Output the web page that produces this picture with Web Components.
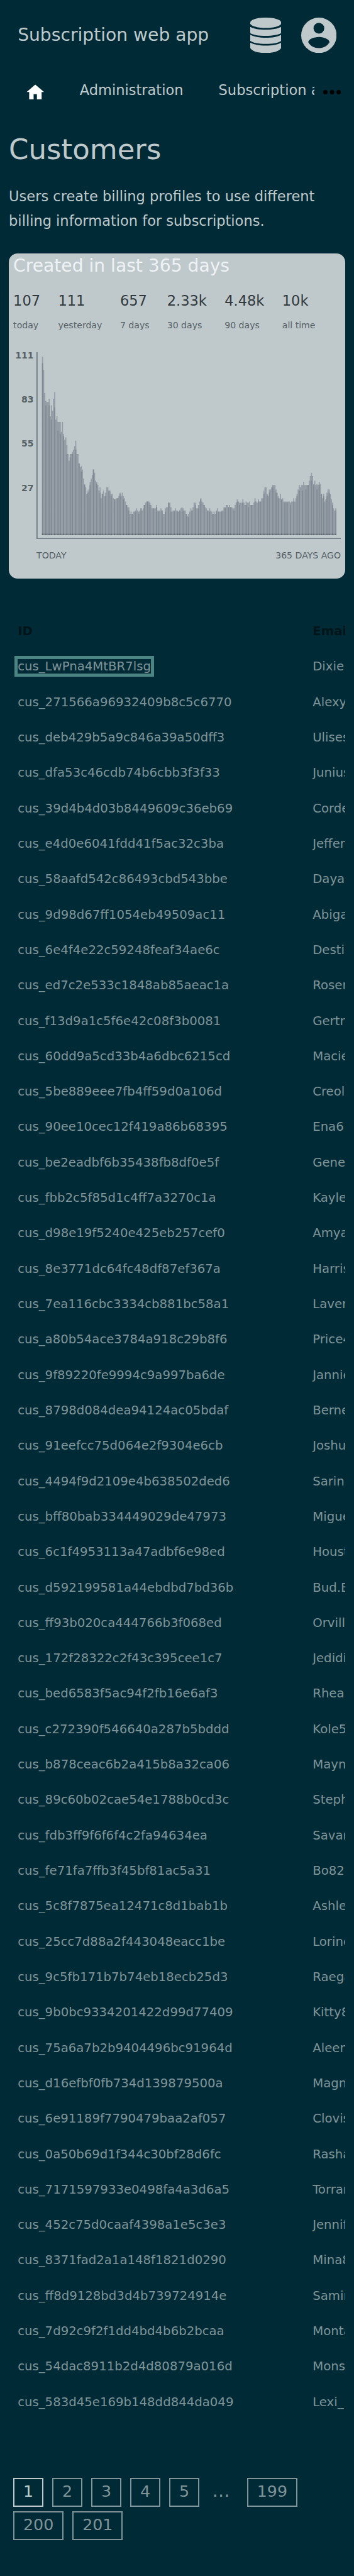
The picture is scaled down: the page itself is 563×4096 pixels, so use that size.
<!DOCTYPE html>
<html lang="en">
<head>
<meta charset="utf-8">
<title>Customers</title>
<style>
html { background: #002b36; overflow: hidden; }
body { margin: 0; background: #002b36; font-family: "DejaVu Sans", sans-serif; color: #bfc9cc; }
</style>
</head>
<body>
<subscription-app></subscription-app>
<script>
const define = (name, html, setup) => {
  const template = document.createElement('template');
  template.innerHTML = html;
  customElements.define(name, class extends HTMLElement {
    constructor() {
      super();
      this.attachShadow({ mode: 'open' }).append(template.content.cloneNode(true));
    }
    connectedCallback() {
      if (setup && !this.ready) { this.ready = true; setup(this, this.shadowRoot); }
    }
  });
};

define('app-header', `
<style>
:host { display: flex; height: 128px; padding: 0 32px; box-sizing: border-box; }
.title { flex: 1; font-size: 32px; line-height: 128px; white-space: nowrap; }
svg { display: block; margin-top: 32px; fill: #bfc9cc; }
.db { width: 56px; height: 64px; margin-right: 36px; }
.user { width: 64px; height: 64px; }
</style>
<div class="title"><slot></slot></div>
<svg class="db" viewBox="0 0 56 64">
  <path d="M0 9C0 4 12 0 28 0S56 4 56 9V11C54 15.500 42 18.700 28 18.700S2 15.500 0 11Z"/>
  <path d="M0 16.700C6 20 16 22 28 22S50 20 56 16.700V28C51 31 41 33 28 33S5 31 0 28Z"/>
  <path d="M0 31C6 34.500 16 36.400 28 36.400S50 34.500 56 31V42C51 45.500 41 47.500 28 47.500S5 45.500 0 42Z"/>
  <path d="M0 45.300C6 48.800 16 50.700 28 50.700S50 48.800 56 45.300V54.500C54 60 43 64 28 64S2 60 0 54.500Z"/>
</svg>
<svg class="user" viewBox="0 0 64 64">
  <path fill-rule="evenodd" d="M32 0A32 32 0 1 1 32 64A32 32 0 1 1 32 0ZM32 9.500A9.700 9.700 0 1 0 32 28.900A9.700 9.700 0 1 0 32 9.500ZM32 35C24 35 12.800 39 12.800 44.500C17 51.500 24 55 32 55S47 51.500 51.200 44.500C51.200 39 40 35 32 35Z"/>
</svg>`);

define('app-nav', `
<style>
:host { display: flex; height: 72px; font-size: 25.6px; line-height: 70px; white-space: nowrap; }
.items { display: flex; width: 568px; overflow: hidden; }
.home { flex: none; width: 32px; height: 28px; margin: 24px 64px 0 48px; fill: #fff; }
.admin { flex: none; width: 251px; }
.more { width: 32px; height: 8px; margin: 34px 0 0 16px; fill: #000; }
</style>
<div class="items">
  <svg class="home" viewBox="0 0 32 28"><path d="M16 .500L32 14H27.500V28H19V18H13V28H5V14H.500Z"/></svg>
  <span class="admin">Administration</span>
  <span>Subscription a</span>
</div>
<svg class="more" viewBox="0 0 32 8"><circle cx="4" cy="4" r="4"/><circle cx="16" cy="4" r="4"/><circle cx="28" cy="4" r="4"/></svg>`);

define('page-intro', `
<style>
:host { display: block; padding: 26.800px 16px 0; height: 231.200px; }
h1 { margin: 0 0 19.600px; font-weight: 400; font-size: 51.200px; line-height: 87px; }
p { margin: 0; font-size: 25.600px; line-height: 43.520px; }
</style>
<h1><slot name="title"></slot></h1>
<p><slot></slot></p>`);

define('stat-item', `
<style>
:host { display: block; white-space: nowrap; }
.value { font-size: 25.600px; line-height: 43.500px; color: #32393d; }
.label { margin-top: 10px; font-size: 16px; line-height: 27.200px; color: #566165; }
</style>
<div class="value"><slot></slot></div>
<div class="label"></div>`, (el, root) => {
  root.querySelector('.label').textContent = el.getAttribute('label');
});

// Column tops, three units per pixel; "a/b" adds an overlapped column from b down and "a*" one of full height.
const recent = '42/78 114 240 282/306 288 288 270/306 366 306/384 336 270 234/318 384 366 396/444 396 396/462 450 396 462/474 492 480 522/570 570 606 570/588 570 558/570 546 528 498/546 570 570 618/624 642 636/666 654 702 732/738 750 786 768/780 762 720/738 702 684 654* 672 714 720/732 738 768 750/780 810 786* 768 798 780/798 750 750 768* 768 786/798 786 810 816* 816 810 810* 798 780/786 798 780 798/816 810 828 846* 858 858/876 894 882 894* 882 882 876/882 864 876 882/894 876 864* 876 864 846* 834 828 828* 828 834/846 846 864 864* 864 864 846/858 876 876/882 876 864 876* 894 894 864/882 858 858 834* 834 858/882 882 876 876/882 864 876 876/882 882 876* 864 858';
const older = '204/216 216 216 234* 246 234/252 222 204 216* 198 174 174/186 204 204 186/204 168 150/156 168 174 186* 198 204 216* 216 204/222 216 222 234* 222 234 216/222 204 222* 222 222 216/222 216 198 198/204 186 186 198* 186 198* 198 204 204/216 186 174 156/168 168 174/186 174 174 156/174 174 186 168/186 174 174/198 168 186 186* 186 174 150/168 168 174 156/168 168 168* 150 150 108/126 90 90 126/138 138 102/120 102 90 78/90 78 78 102/120 120 138/150 150 126 156* 150 168 168/174 168 168/174 168 168 174/186 168 168 150/168 168 150 126/138 102 78/108 90 78 78/108 60 78 78/102 78 78* 54 30 12/54 30 72/78 54 78 72/102 78 60/78 72 126* 150 126/138 168 156 120/138 102 102/120 126 156 174/186 204 216 204/216';

define('created-chart', `
<style>
:host { display: block; height: 588px; margin: 0 16px; border-radius: 16px; background: #bfc9cc; }
h2 { margin: 0 0 17.400px; padding-left: 8px; font-weight: 400; font-size: 32px; line-height: 46px; color: #eef2f5; }
.stats { display: grid; grid-template-columns: 81px 112px 85px 104px 104px 1fr; padding-left: 8px; height: 114.600px; }
.plot { display: flex; height: 338px; }
.scale { width: 45px; margin-right: 5px; font-size: 16px; font-weight: 700; line-height: 13px; color: #566165; text-align: right; }
.scale div { height: 80px; }
svg { display: block; width: 550px; height: 338px; }
.range { display: flex; justify-content: space-between; margin: 16.900px 8px 0 50px; font-size: 16px; line-height: 27.200px; color: #566165; }
</style>
<h2>Created in last 365 days</h2>
<div class="stats">
  <stat-item label="today">107</stat-item><stat-item label="yesterday">111</stat-item>
  <stat-item label="7 days">657</stat-item><stat-item label="30 days">2.33k</stat-item>
  <stat-item label="90 days">4.48k</stat-item><stat-item label="all time">10k</stat-item>
</div>
<div class="plot">
  <div class="scale"><div>111</div><div>83</div><div>55</div><div>27</div></div>
  <svg viewBox="0 0 550 338">
    <path class="bars" fill="#959ea6"/><path class="overlap" fill="#818a92"/>
    <path d="M10 328H542V330H10Z" fill="#757e86"/><path class="feet" fill="#596168"/>
    <path d="M0 0H2V336H550V338H0Z" fill="#6a777f"/>
  </svg>
</div>
<div class="range"><span>TODAY</span><span>365 DAYS AGO</span></div>`, (el, root) => {
  const cols = [...recent.split(' ').map(t => [t, 1008]), ...older.split(' ').map(t => [t, 348])];
  let bars = 'M10 330', overlap = '', feet = '';
  cols.forEach(([token, base], i) => {
    const x = 10 + i * 2, y = v => 330 - (base - v) / 3;
    const top = parseInt(token, 10);
    bars += `V${y(top)}H${x + 2}`;
    if (/[*/]/.test(token)) {
      const low = token.includes('/') ? Number(token.split('/')[1]) : top;
      overlap += `M${x} ${y(low)}h2V330h-2Z`;
      feet += `M${x} 328h2v2h-2Z`;
    }
  });
  root.querySelector('.bars').setAttribute('d', bars + 'V330Z');
  root.querySelector('.overlap').setAttribute('d', overlap);
  root.querySelector('.feet').setAttribute('d', feet);
});

define('customer-row', `
<style>
:host { display: grid; grid-template-columns: 533px 59px; height: 64px; padding-left: 16px; font-size: 22.400px; line-height: 64px; color: #7f9398; white-space: nowrap; }
:host([head]) { font-weight: 700; color: #00141a; }
:host([focused]) .id { outline: 6.800px solid #4a8583; }
.id { line-height: 1; }
.email { overflow: hidden; }
</style>
<div><span class="id"></span></div><div class="email"></div>`, (el, root) => {
  root.querySelector('.id').textContent = el.getAttribute('cid');
  root.querySelector('.email').textContent = el.getAttribute('email');
});

const customers = `LwPna4MtBR7lsg Dixie
271566a96932409b8c5c6770 Alexy
deb429b5a9c846a39a50dff3 Ulises
dfa53c46cdb74b6cbb3f3f33 Junius
39d4b4d03b8449609c36eb69 Corde
e4d0e6041fdd41f5ac32c3ba Jeffer
58aafd542c86493cbd543bbe Daya
9d98d67ff1054eb49509ac11 Abiga
6e4f4e22c59248feaf34ae6c Desti
ed7c2e533c1848ab85aeac1a Rosen
f13d9a1c5f6e42c08f3b0081 Gertr
60dd9a5cd33b4a6dbc6215cd Macie
5be889eee7fb4ff59d0a106d Creol
90ee10cec12f419a86b68395 Ena6
be2eadbf6b35438fb8df0e5f Gene
fbb2c5f85d1c4ff7a3270c1a Kayle
d98e19f5240e425eb257cef0 Amya
8e3771dc64fc48df87ef367a Harris
7ea116cbc3334cb881bc58a1 Laver
a80b54ace3784a918c29b8f6 Price4
9f89220fe9994c9a997ba6de Jannie
8798d084dea94124ac05bdaf Berne
91eefcc75d064e2f9304e6cb Joshu
4494f9d2109e4b638502ded6 Sarin
bff80bab334449029de47973 Migue
6c1f4953113a47adbf6e98ed Houst
d592199581a44ebdbd7bd36b Bud.E
ff93b020ca444766b3f068ed Orvill
172f28322c2f43c395cee1c7 Jedidi
bed6583f5ac94f2fb16e6af3 Rhea
c272390f546640a287b5bddd Kole5
b878ceac6b2a415b8a32ca06 Mayn
89c60b02cae54e1788b0cd3c Steph
fdb3ff9f6f6f4c2fa94634ea Savan
fe71fa7ffb3f45bf81ac5a31 Bo82
5c8f7875ea12471c8d1bab1b Ashle
25cc7d88a2f443048eacc1be Lorine
9c5fb171b7b74eb18ecb25d3 Raega
9b0bc9334201422d99d77409 Kitty8
75a6a7b2b9404496bc91964d Aleen
d16efbf0fb734d139879500a Magn
6e91189f7790479baa2af057 Clovis
0a50b69d1f344c30bf28d6fc Rasha
7171597933e0498fa4a3d6a5 Torran
452c75d0caaf4398a1e5c3e3 Jennif
8371fad2a1a148f1821d0290 Mina8
ff8d9128bd3d4b739724914e Samir
7d92c9f2f1dd4bd4b6b2bcaa Monta
54dac8911b2d4d80879a016d Mons
583d45e169b148dd844da049 Lexi_`.split('\n').map(line => line.split(' '));

define('customer-table', `
<style>:host { display: block; margin: 63.200px 16px 0; }</style>
<customer-row head cid="ID" email="Email"></customer-row>`, (el, root) => {
  customers.forEach(([id, email], i) => {
    const row = document.createElement('customer-row');
    row.setAttribute('cid', 'cus_' + id);
    row.setAttribute('email', email);
    if (i === 0) row.setAttribute('focused', '');
    root.append(row);
  });
});

define('page-link', `
<style>
:host { display: block; box-sizing: border-box; height: 52px; padding: 0 15.700px; border: 2.300px solid #7f9398; font-size: 28.800px; line-height: 43.500px; color: #7f9398; }
:host([current]) { color: #bfd0d0; border-color: #bfc9cc; }
:host([gap]) { width: 54px; padding: 0 0 0 5px; border-color: transparent; font-size: 32px; }
</style><slot></slot>`);

define('page-links', `
<style>:host { display: flex; flex-wrap: wrap; gap: 8px 16.200px; margin: 104.800px 60px 0 24px; }</style>
<slot></slot>`);

define('subscription-app', `
<style>:host { display: block; zoom: .88; width: 640px; height: 4654px; overflow: hidden; }</style>
<app-header>Subscription web app</app-header>
<app-nav></app-nav>
<page-intro><span slot="title">Customers</span>Users create billing profiles to use different billing information for subscriptions.</page-intro>
<created-chart></created-chart>
<customer-table></customer-table>
<page-links>
  <page-link current>1</page-link><page-link>2</page-link><page-link>3</page-link><page-link>4</page-link><page-link>5</page-link><page-link gap>…</page-link><page-link>199</page-link><page-link>200</page-link><page-link>201</page-link>
</page-links>`);
</script>
</body>
</html>
